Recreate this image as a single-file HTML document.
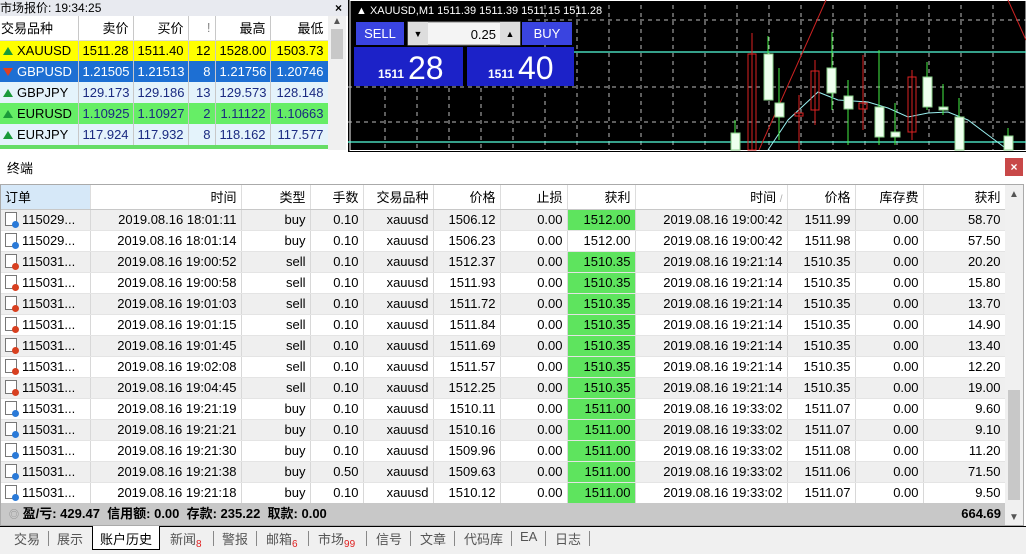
<!DOCTYPE html>
<html><head><meta charset="utf-8"><style>
*{margin:0;padding:0;box-sizing:border-box}
body{width:1026px;height:554px;overflow:hidden;background:#f0f0f0;font-family:"Liberation Sans","Noto Sans CJK SC",sans-serif;font-size:13px;color:#000;position:relative}
.abs{position:absolute}
table{border-collapse:collapse;table-layout:fixed}
td{white-space:nowrap;overflow:hidden;padding:0 4px;text-align:right}
#mw{left:0;top:0;width:348px;height:152px;background:#fff}
#mw td{height:21px;border-right:1px solid #c8c8c8}
#mw .h td{height:24px;background:#fff;border-bottom:1px solid #ddd}
.ar{display:inline-block;width:0;height:0;border-left:5px solid transparent;border-right:5px solid transparent;margin-right:4px}
.up{border-bottom:8px solid #1a9a3a}
.dn{border-top:8px solid #e04020}
#term td{height:21px;border-right:1px solid #d8d8d8;border-bottom:1px solid #e4e4e4}
#term tr.g td{background:#efefef}
#term td.gr{background:#5ee45e!important}
#term .h td{height:24px;background:#fff;border-bottom:1px solid #c8c8c8;border-right:1px solid #ddd}
.ic{display:inline-block;width:12px;height:14px;border:1px solid #777;background:#fff;position:relative;vertical-align:-2px;margin-right:5px}
.ic i{position:absolute;right:-3px;bottom:-3px;width:7px;height:7px;border-radius:50%}
.tab{position:absolute;top:529px;height:20px;font-size:13px;color:#555}
.sep{position:absolute;top:531px;width:1px;height:15px;background:#888}
sub{color:#e02020;font-size:10px;vertical-align:-3px}
</style></head><body>

<!-- Market watch -->
<div id="mw" class="abs">
<div class="abs" style="left:0;top:0;width:348px;height:16px;background:#e8eaf0;font-size:12px;line-height:16px">市场报价: 19:34:25<span style="position:absolute;right:6px;font-weight:bold">×</span></div>
<table class="abs" style="left:0;top:16px;width:328px">
<colgroup><col style="width:78px"><col style="width:55px"><col style="width:55px"><col style="width:27px"><col style="width:55px"><col style="width:58px"></colgroup>
<tr class="h"><td style="text-align:left;padding-left:1px">交易品种</td><td>卖价</td><td>买价</td><td style="color:#888">!</td><td>最高</td><td>最低</td></tr>
<tr style="background:#ffff00"><td style="text-align:left;padding-left:3px"><span class="ar up"></span>XAUUSD</td><td>1511.28</td><td>1511.40</td><td>12</td><td>1528.00</td><td>1503.73</td></tr>
<tr style="background:#1d6fd3;color:#fff"><td style="text-align:left;padding-left:3px"><span class="ar dn"></span>GBPUSD</td><td>1.21505</td><td>1.21513</td><td>8</td><td>1.21756</td><td>1.20746</td></tr>
<tr style="background:#e4f3fb;color:#1a2a80"><td style="text-align:left;padding-left:3px;color:#000"><span class="ar up"></span>GBPJPY</td><td>129.173</td><td>129.186</td><td>13</td><td>129.573</td><td>128.148</td></tr>
<tr style="background:#66ee66;color:#1a2a80"><td style="text-align:left;padding-left:3px;color:#000"><span class="ar up"></span>EURUSD</td><td>1.10925</td><td>1.10927</td><td>2</td><td>1.11122</td><td>1.10663</td></tr>
<tr style="background:#e4f3fb;color:#1a2a80"><td style="text-align:left;padding-left:3px;color:#000"><span class="ar up"></span>EURJPY</td><td>117.924</td><td>117.932</td><td>8</td><td>118.162</td><td>117.577</td></tr>
</table>
<div class="abs" style="left:328px;top:16px;width:18px;height:134px;background:#f0f0f0"><div style="font-size:10px;text-align:center;color:#555">▲</div><div style="margin:2px 3px;height:30px;background:#c8c8c8"></div></div>
<div class="abs" style="left:0;top:145px;width:328px;height:4px;background:#66dd66"></div>
</div>

<!-- Chart -->
<svg class="abs" style="left:348px;top:0" width="678" height="152">
<rect width="678" height="152" fill="#000"/>
<rect x="2" y="0.5" width="676" height="150" fill="none" stroke="#fff" stroke-width="1"/>
<g stroke="#bbb" stroke-dasharray="4,4" stroke-width="1">
<line x1="180" y1="20" x2="678" y2="20"/><line x1="0" y1="87" x2="678" y2="87"/><line x1="0" y1="122" x2="678" y2="122"/>
<line x1="37" y1="88" x2="37" y2="150"/><line x1="69" y1="88" x2="69" y2="150"/><line x1="101" y1="88" x2="101" y2="150"/><line x1="133" y1="88" x2="133" y2="150"/><line x1="165" y1="88" x2="165" y2="150"/>
<line x1="197" y1="5" x2="197" y2="150"/><line x1="229" y1="5" x2="229" y2="150"/><line x1="261" y1="5" x2="261" y2="150"/><line x1="293" y1="5" x2="293" y2="150"/><line x1="325" y1="5" x2="325" y2="150"/><line x1="357" y1="5" x2="357" y2="150"/><line x1="389" y1="5" x2="389" y2="150"/><line x1="421" y1="5" x2="421" y2="150"/><line x1="453" y1="5" x2="453" y2="150"/><line x1="485" y1="5" x2="485" y2="150"/><line x1="517" y1="5" x2="517" y2="150"/><line x1="549" y1="5" x2="549" y2="150"/><line x1="581" y1="5" x2="581" y2="150"/><line x1="613" y1="5" x2="613" y2="150"/><line x1="645" y1="5" x2="645" y2="150"/>
</g>
<line x1="180" y1="52" x2="678" y2="52" stroke="#5fd" stroke-width="1.2"/>
<line x1="0" y1="142" x2="678" y2="142" stroke="#5fd" stroke-width="1.2"/>
<line x1="411" y1="150" x2="478" y2="0" stroke="#c22" stroke-width="1"/>
<line x1="660" y1="0" x2="678" y2="40" stroke="#c22" stroke-width="1"/>
<polyline points="420,150 440,120 470,92 490,100 520,102 540,108 560,117 580,113 600,112 620,120 640,135 660,150" fill="none" stroke="#9ee" stroke-width="1"/>
<g stroke="#4e4" stroke-width="1">
<line x1="387" y1="120" x2="387" y2="150"/><line x1="420" y1="36" x2="420" y2="100"/><line x1="431" y1="68" x2="431" y2="140"/><line x1="484" y1="32" x2="484" y2="110"/><line x1="500" y1="80" x2="500" y2="145"/><line x1="531" y1="50" x2="531" y2="145"/><line x1="547" y1="103" x2="547" y2="145"/><line x1="579" y1="62" x2="579" y2="110"/><line x1="595" y1="84" x2="595" y2="115"/><line x1="611" y1="98" x2="611" y2="150"/><line x1="660" y1="128" x2="660" y2="150"/>
</g>
<g stroke="#d22" stroke-width="1">
<line x1="404" y1="33" x2="404" y2="150"/><line x1="451" y1="95" x2="451" y2="150"/><line x1="467" y1="60" x2="467" y2="125"/><line x1="515" y1="55" x2="515" y2="130"/><line x1="564" y1="70" x2="564" y2="140"/>
</g>
<g fill="#efe" stroke="#8c8">
<rect x="383" y="133" width="9" height="17"/><rect x="416" y="54" width="9" height="46"/><rect x="427" y="103" width="9" height="14"/><rect x="479" y="68" width="9" height="25"/><rect x="496" y="96" width="9" height="13"/><rect x="527" y="107" width="9" height="30"/><rect x="543" y="132" width="9" height="5"/><rect x="575" y="77" width="9" height="30"/><rect x="591" y="107" width="9" height="3"/><rect x="607" y="117" width="9" height="33"/><rect x="656" y="136" width="9" height="14"/>
</g>
<g fill="none" stroke="#d22">
<rect x="400" y="54" width="8" height="96"/><rect x="447" y="113" width="8" height="3"/><rect x="463" y="71" width="8" height="39"/><rect x="511" y="103" width="8" height="6"/><rect x="560" y="77" width="8" height="55"/>
</g>
<text x="8" y="14" fill="#fff" font-size="11" font-family="Liberation Sans">▲ XAUUSD,M1  1511.39 1511.39 1511.15 1511.28</text>
<rect x="8" y="22" width="48" height="23" fill="#3a44e0"/><text x="32" y="38" fill="#fff" font-size="13" text-anchor="middle" font-family="Liberation Sans">SELL</text>
<rect x="60" y="22" width="112" height="23" fill="#f4f4f4" stroke="#888"/><rect x="60" y="22" width="20" height="23" fill="#ddd"/><rect x="152" y="22" width="20" height="23" fill="#ddd"/>
<text x="70" y="37" font-size="9" text-anchor="middle">▼</text><text x="162" y="37" font-size="9" text-anchor="middle">▲</text>
<text x="148" y="39" font-size="13" text-anchor="end" font-family="Liberation Sans">0.25</text>
<rect x="174" y="22" width="50" height="23" fill="#3a44e0"/><text x="199" y="38" fill="#fff" font-size="13" text-anchor="middle" font-family="Liberation Sans">BUY</text>
<rect x="6" y="47" width="109" height="39" fill="#1c22c8"/><rect x="119" y="47" width="107" height="39" fill="#1c22c8"/>
<text x="30" y="78" fill="#fff" font-size="12" font-weight="bold" font-family="Liberation Sans">1511</text><text x="60" y="79" fill="#fff" font-size="32" font-family="Liberation Sans">28</text>
<text x="140" y="78" fill="#fff" font-size="12" font-weight="bold" font-family="Liberation Sans">1511</text><text x="170" y="79" fill="#fff" font-size="32" font-family="Liberation Sans">40</text>
</svg>

<!-- Terminal -->
<div class="abs" style="left:0;top:152px;width:1026px;height:402px;background:#fff"></div>
<div class="abs" style="left:7px;top:158px;font-size:13px">终端</div>
<div class="abs" style="left:1005px;top:158px;width:18px;height:18px;background:#c84848;color:#fff;font-size:12px;text-align:center;line-height:18px;font-weight:bold">×</div>
<div class="abs" style="left:0;top:184px;width:1024px;height:342px;border:1px solid #aaa"></div>
<table id="term" class="abs" style="left:1px;top:185px;width:1004px">
<colgroup><col style="width:89px"><col style="width:151px"><col style="width:69px"><col style="width:53px"><col style="width:70px"><col style="width:67px"><col style="width:67px"><col style="width:68px"><col style="width:152px"><col style="width:68px"><col style="width:68px"><col style="width:82px"></colgroup>
<tr class="h"><td style="text-align:left;background:#d6e8f8">订单</td><td>时间</td><td>类型</td><td>手数</td><td>交易品种</td><td>价格</td><td>止损</td><td>获利</td><td>时间 <span style="color:#aaa;font-size:10px">/</span></td><td>价格</td><td>库存费</td><td>获利</td></tr>
<tr class="g"><td style="text-align:left"><span class="ic"><i style="background:#2a7ad8"></i></span>115029...</td><td>2019.08.16 18:01:11</td><td>buy</td><td>0.10</td><td>xauusd</td><td>1506.12</td><td>0.00</td><td class="gr">1512.00</td><td>2019.08.16 19:00:42</td><td>1511.99</td><td>0.00</td><td>58.70</td></tr>
<tr><td style="text-align:left"><span class="ic"><i style="background:#2a7ad8"></i></span>115029...</td><td>2019.08.16 18:01:14</td><td>buy</td><td>0.10</td><td>xauusd</td><td>1506.23</td><td>0.00</td><td>1512.00</td><td>2019.08.16 19:00:42</td><td>1511.98</td><td>0.00</td><td>57.50</td></tr>
<tr class="g"><td style="text-align:left"><span class="ic"><i style="background:#d84020"></i></span>115031...</td><td>2019.08.16 19:00:52</td><td>sell</td><td>0.10</td><td>xauusd</td><td>1512.37</td><td>0.00</td><td class="gr">1510.35</td><td>2019.08.16 19:21:14</td><td>1510.35</td><td>0.00</td><td>20.20</td></tr>
<tr><td style="text-align:left"><span class="ic"><i style="background:#d84020"></i></span>115031...</td><td>2019.08.16 19:00:58</td><td>sell</td><td>0.10</td><td>xauusd</td><td>1511.93</td><td>0.00</td><td class="gr">1510.35</td><td>2019.08.16 19:21:14</td><td>1510.35</td><td>0.00</td><td>15.80</td></tr>
<tr class="g"><td style="text-align:left"><span class="ic"><i style="background:#d84020"></i></span>115031...</td><td>2019.08.16 19:01:03</td><td>sell</td><td>0.10</td><td>xauusd</td><td>1511.72</td><td>0.00</td><td class="gr">1510.35</td><td>2019.08.16 19:21:14</td><td>1510.35</td><td>0.00</td><td>13.70</td></tr>
<tr><td style="text-align:left"><span class="ic"><i style="background:#d84020"></i></span>115031...</td><td>2019.08.16 19:01:15</td><td>sell</td><td>0.10</td><td>xauusd</td><td>1511.84</td><td>0.00</td><td class="gr">1510.35</td><td>2019.08.16 19:21:14</td><td>1510.35</td><td>0.00</td><td>14.90</td></tr>
<tr class="g"><td style="text-align:left"><span class="ic"><i style="background:#d84020"></i></span>115031...</td><td>2019.08.16 19:01:45</td><td>sell</td><td>0.10</td><td>xauusd</td><td>1511.69</td><td>0.00</td><td class="gr">1510.35</td><td>2019.08.16 19:21:14</td><td>1510.35</td><td>0.00</td><td>13.40</td></tr>
<tr><td style="text-align:left"><span class="ic"><i style="background:#d84020"></i></span>115031...</td><td>2019.08.16 19:02:08</td><td>sell</td><td>0.10</td><td>xauusd</td><td>1511.57</td><td>0.00</td><td class="gr">1510.35</td><td>2019.08.16 19:21:14</td><td>1510.35</td><td>0.00</td><td>12.20</td></tr>
<tr class="g"><td style="text-align:left"><span class="ic"><i style="background:#d84020"></i></span>115031...</td><td>2019.08.16 19:04:45</td><td>sell</td><td>0.10</td><td>xauusd</td><td>1512.25</td><td>0.00</td><td class="gr">1510.35</td><td>2019.08.16 19:21:14</td><td>1510.35</td><td>0.00</td><td>19.00</td></tr>
<tr><td style="text-align:left"><span class="ic"><i style="background:#2a7ad8"></i></span>115031...</td><td>2019.08.16 19:21:19</td><td>buy</td><td>0.10</td><td>xauusd</td><td>1510.11</td><td>0.00</td><td class="gr">1511.00</td><td>2019.08.16 19:33:02</td><td>1511.07</td><td>0.00</td><td>9.60</td></tr>
<tr class="g"><td style="text-align:left"><span class="ic"><i style="background:#2a7ad8"></i></span>115031...</td><td>2019.08.16 19:21:21</td><td>buy</td><td>0.10</td><td>xauusd</td><td>1510.16</td><td>0.00</td><td class="gr">1511.00</td><td>2019.08.16 19:33:02</td><td>1511.07</td><td>0.00</td><td>9.10</td></tr>
<tr><td style="text-align:left"><span class="ic"><i style="background:#2a7ad8"></i></span>115031...</td><td>2019.08.16 19:21:30</td><td>buy</td><td>0.10</td><td>xauusd</td><td>1509.96</td><td>0.00</td><td class="gr">1511.00</td><td>2019.08.16 19:33:02</td><td>1511.08</td><td>0.00</td><td>11.20</td></tr>
<tr class="g"><td style="text-align:left"><span class="ic"><i style="background:#2a7ad8"></i></span>115031...</td><td>2019.08.16 19:21:38</td><td>buy</td><td>0.50</td><td>xauusd</td><td>1509.63</td><td>0.00</td><td class="gr">1511.00</td><td>2019.08.16 19:33:02</td><td>1511.06</td><td>0.00</td><td>71.50</td></tr>
<tr><td style="text-align:left"><span class="ic"><i style="background:#2a7ad8"></i></span>115031...</td><td>2019.08.16 19:21:18</td><td>buy</td><td>0.10</td><td>xauusd</td><td>1510.12</td><td>0.00</td><td class="gr">1511.00</td><td>2019.08.16 19:33:02</td><td>1511.07</td><td>0.00</td><td>9.50</td></tr>
</table>
<div class="abs" style="left:1px;top:503px;width:1004px;height:22px;background:#c8c8c8;font-weight:bold;line-height:22px;padding-left:8px"><span style="color:#888;font-weight:normal;font-size:10px">◎</span> 盈/亏: 429.47 &nbsp;信用额: 0.00 &nbsp;存款: 235.22 &nbsp;取款: 0.00<span style="position:absolute;right:4px">664.69</span></div>
<div class="abs" style="left:1005px;top:185px;width:18px;height:340px;background:#f0f0f0"><div style="font-size:10px;text-align:center;color:#555;margin-top:4px">▲</div><div style="position:absolute;top:205px;left:3px;width:12px;height:110px;background:#c8c8c8"></div><div style="position:absolute;bottom:2px;width:18px;font-size:10px;text-align:center;color:#555">▼</div></div>

<!-- Tabs -->
<div class="abs" style="left:0;top:526px;width:1026px;height:28px;background:#f0f0f0;border-top:1px solid #000"></div>
<div class="abs" style="left:92px;top:526px;width:68px;height:24px;background:#fff;border:1px solid #000;border-top:none"></div>
<div class="tab" style="left:14px">交易</div><div class="sep" style="left:48px"></div>
<div class="tab" style="left:57px">展示</div>
<div class="tab" style="left:100px;color:#000">账户历史</div>
<div class="tab" style="left:170px">新闻<sub>8</sub></div><div class="sep" style="left:213px"></div>
<div class="tab" style="left:222px">警报</div><div class="sep" style="left:256px"></div>
<div class="tab" style="left:266px">邮箱<sub>6</sub></div><div class="sep" style="left:308px"></div>
<div class="tab" style="left:318px">市场<sub>99</sub></div><div class="sep" style="left:366px"></div>
<div class="tab" style="left:376px">信号</div><div class="sep" style="left:410px"></div>
<div class="tab" style="left:420px">文章</div><div class="sep" style="left:454px"></div>
<div class="tab" style="left:464px">代码库</div><div class="sep" style="left:511px"></div>
<div class="tab" style="left:520px">EA</div><div class="sep" style="left:545px"></div>
<div class="tab" style="left:555px">日志</div><div class="sep" style="left:589px"></div>
</body></html>
